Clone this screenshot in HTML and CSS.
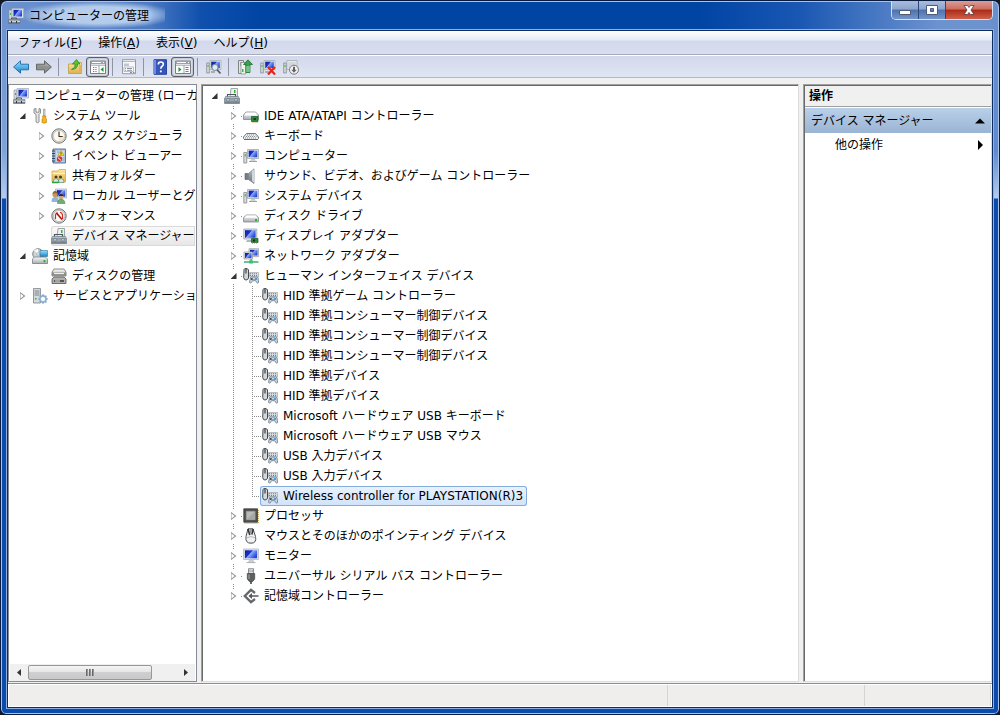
FILE: index.html
```html
<!DOCTYPE html>
<html lang="ja">
<head>
<meta charset="utf-8">
<title>コンピューターの管理</title>
<link rel="stylesheet" href="styles.css">
</head>
<body>
<svg class="sprite" aria-hidden="true">
  <defs>
    <linearGradient id="g-screen" x1="0" y1="0" x2="1" y2=".6"><stop offset="0" stop-color="#0c1a96"/><stop offset=".45" stop-color="#1a35d0"/><stop offset=".52" stop-color="#8fa9f8"/><stop offset="1" stop-color="#2145dc"/></linearGradient>
    <linearGradient id="g-metal" x1="0" y1="0" x2="0" y2="1"><stop offset="0" stop-color="#fafafa"/><stop offset="1" stop-color="#a9adb1"/></linearGradient>
    <linearGradient id="g-box" x1="0" y1="0" x2="0" y2="1"><stop offset="0" stop-color="#b4bec6"/><stop offset="1" stop-color="#66747f"/></linearGradient>
    <linearGradient id="g-blue" x1="0" y1="0" x2="0" y2="1"><stop offset="0" stop-color="#9be0fb"/><stop offset="1" stop-color="#1585d0"/></linearGradient>
    <linearGradient id="g-folder" x1="0" y1="0" x2="0" y2="1"><stop offset="0" stop-color="#fbe9a4"/><stop offset="1" stop-color="#dfae4c"/></linearGradient>
  </defs>
  <symbol id="i-mgmt" viewBox="0 0 16 16">
    <path d="M1 2h3v9H1z" fill="#d4d7da" stroke="#8a8f96" stroke-width=".6"/><path d="M2 5h1v2H2z" fill="#3b3"/>
    <path d="M4 .5h11.500V10H4z" fill="#dde1e6" stroke="#a4abb4" stroke-width=".7"/><path d="M5.500 1.800h8.500v6.700H5.500z" fill="url(#g-screen)"/>
    <path d="M3.500 11.500v-1.500h5v1.500" fill="none" stroke="#555" stroke-width="1"/><path d="M.5 11.500h11.500v4H.5z" fill="url(#g-box)" stroke="#65727d" stroke-width=".6"/><path d="M1 13.500h11" stroke="#ccd3d8"/><path d="M3 13h1v2H3zM8 13h1v2H8z" fill="#333"/>
  </symbol>
  <symbol id="i-devmgr" viewBox="0 0 16 16">
    <path d="M7 .5h6.500v8H6z" fill="#eceeef" stroke="#8e9397" stroke-width=".8"/><path d="M10 2h1.500v3H10z" fill="#38b52d"/>
    <path d="M3.500 9V6.500h8V9" fill="none" stroke="#4b555d" stroke-width="1.200"/>
    <path d="M1.500 8.500h13l1 2.500H.5z" fill="#b3bec6" stroke="#6d7983" stroke-width=".6"/><path d="M.5 11h15v4.500H.5z" fill="url(#g-box)" stroke="#65727d" stroke-width=".6"/><path d="M3 10.500h2v2.500H3zM11 10.500h2v2.500h-2z" fill="#dce2e6" stroke="#3f4a52" stroke-width=".4"/>
  </symbol>
  <symbol id="i-tools" viewBox="0 0 16 16">
    <path d="M2 1v4l2 1.500V14q1.500 1.500 3 0V6.500L8.500 5V1L7 .5v3.700H4V.5z" fill="#e3e5e7" stroke="#777" stroke-width=".8"/>
    <path d="M11.500 1h1.500v7h-1.500z" fill="#ddd" stroke="#777" stroke-width=".5"/><path d="M10.500 8h3.500l-.5 2 1 1v3.500q-2.200 1.500-4.500 0V11l1-1z" fill="#f6b51e" stroke="#b97d08" stroke-width=".6"/>
  </symbol>
  <symbol id="i-clock" viewBox="0 0 16 16">
    <circle cx="8" cy="8" r="7.200" fill="#d9d9d6" stroke="#77797b"/><circle cx="8" cy="8" r="5.600" fill="#fffaf0" stroke="#b8b4a8" stroke-width=".6"/><path d="M8 8v5.500a5.500 5.500 0 0 0 5.500-5.500z" fill="#f3d9a8" opacity=".6"/><path d="M8 3.500V8.500h3.700" fill="none" stroke="#333" stroke-width="1.100"/>
  </symbol>
  <symbol id="i-event" viewBox="0 0 16 16">
    <path d="M2 1h12.500v14H2z" fill="#a5bddb" stroke="#5f7797"/><path d="M5 2.500h8.500v11H5z" fill="#c9daee"/><path d="M1 3h3M1 5.500h3M1 8h3M1 10.500h3M1 13h3" stroke="#314763"/><path d="M10 2.500l3.200 5H6.800z" fill="#ffdc28" stroke="#a48100" stroke-width=".5"/><path d="M10 4.200v1.700M10 6.300v.6" stroke="#222" stroke-width=".8"/><circle cx="8.500" cy="11" r="2.700" fill="#dc3023"/><path d="M7 9.700l3 2.600" stroke="#fff"/><path d="M6 4h2M11.500 10h2M11.500 12h2" stroke="#577bad" stroke-width=".7"/>
  </symbol>
  <symbol id="i-share" viewBox="0 0 16 16">
    <path d="M1 3h6l1-1.500h6.500V14H1z" fill="url(#g-folder)" stroke="#c99f4a" stroke-width=".7"/><path d="M1.500 5.500h12.500" stroke="#fff5c9"/><circle cx="5" cy="9" r="1.500" fill="#53381e"/><circle cx="9.500" cy="9" r="1.500" fill="#53381e"/><path d="M2 14.500q0-4 3-4t3 4zM7 14.500q0-4 3-4t3 4z" fill="#d6e8df" stroke="#458b5c" stroke-width=".6"/><path d="M1 14.500h6" stroke="#27a33b" stroke-width="1.500"/>
  </symbol>
  <symbol id="i-users" viewBox="0 0 16 16">
    <path d="M4.500 1h11v9h-11z" fill="#e1e4e8" stroke="#a1a9b6" stroke-width=".7"/><path d="M5.800 2.200h8.500v6.500H5.800z" fill="url(#g-screen)"/><circle cx="4" cy="6.500" r="2.600" fill="#c9975c"/><path d="M1.500 6q.5-3.500 3-3t2.200 2.700q-3-1-5.200.3z" fill="#8a6a2f"/><path d="M.5 14q0-5 3.500-5t4 5z" fill="#8fb6d8"/><circle cx="10" cy="8.700" r="2.300" fill="#d8a873"/><path d="M7.700 8q.5-2.500 2.500-2.300t2 2.300z" fill="#35291b"/><path d="M6.500 15.500q0-4.500 3.500-4.500t4 4.500z" fill="#6fae74" stroke="#3d7d48" stroke-width=".5"/>
  </symbol>
  <symbol id="i-perf" viewBox="0 0 16 16">
    <circle cx="8" cy="8" r="7.200" fill="#d5d5d5" stroke="#747474"/><circle cx="8" cy="8" r="5.500" fill="#fff" stroke="#999" stroke-width=".5"/><path d="M4.500 11V7q.5-2 2-2.500M9 4.200q2.500.8 2.500 3.300V11" fill="none" stroke="#da251d" stroke-width="1.200"/><path d="M5.500 5l5.500 6.500" stroke="#a8150e" stroke-width="1.600"/>
  </symbol>
  <symbol id="i-storage" viewBox="0 0 16 16">
    <circle cx="6" cy="6" r="5.300" fill="#cdd4d4" stroke="#7e8a88"/><path d="M6 6L2 2.500A5 5 0 0 1 6 1z" fill="#f9fbfb"/><circle cx="6" cy="6" r="1.300" fill="#fff" stroke="#888" stroke-width=".5"/><path d="M8 2.500h7.500v6H8z" fill="url(#g-blue)" stroke="#2b7199" stroke-width=".6"/><path d="M2.500 9h11l2 2v4.500H.5V11z" fill="url(#g-metal)" stroke="#6a6f74" stroke-width=".7"/><path d="M11.500 12h2v2.200h-2z" fill="#27b52a"/>
  </symbol>
  <symbol id="i-diskmgmt" viewBox="0 0 16 16">
    <path d="M3 1h10l2 3v4H1V4z" fill="url(#g-metal)" stroke="#6f6f6b" stroke-width=".8"/><path d="M1 4.500h14v3H1z" fill="#8b8c87"/><path d="M3 5.500h10" stroke="#f1f1ef" stroke-width="1.200"/><path d="M3 9h10l2 2v4.500H1V11z" fill="#b0b1ad" stroke="#555" stroke-width=".8"/><path d="M3 12h10v2H3z" fill="#545450"/><path d="M4 13h5" stroke="#eee"/>
  </symbol>
  <symbol id="i-services" viewBox="0 0 16 16">
    <path d="M1.500.5h7v14.500h-7z" fill="#d7dadd" stroke="#7c838a" stroke-width=".8"/><path d="M2.500 3h5M2.500 5h5M2.500 7h5" stroke="#7c838a"/><path d="M3 10h1.500v1.500H3z" fill="#33b235"/><circle cx="11" cy="11" r="3" fill="#fff" stroke="#9dbbd6" stroke-width="1.800"/><path d="M11 6.300v2M11 13.700v2M6.300 11h2M13.700 11h2M7.700 7.700l1.400 1.400M13 13l1.400 1.400M7.700 14.300L9.100 13M13 9.100l1.400-1.400" stroke="#7fa3c6" stroke-width="1.400"/>
  </symbol>
  <symbol id="i-ide" viewBox="0 0 16 16">
    <path d="M3 4h9.500l3 3v4.500H.5V7z" fill="url(#g-metal)" stroke="#85898e" stroke-width=".8"/><path d="M3 4.700h9.500l2 2.800H1.500z" fill="#fff"/><path d="M8.500 8.500h6.500V13.500H8.500z" fill="#2c8740" stroke="#16582a" stroke-width=".7"/><path d="M10.500 10h2.500v2h-2.500z" fill="#1c3a24"/><path d="M9.500 14.500h5" stroke="#d3b447" stroke-dasharray="1 1"/>
  </symbol>
  <symbol id="i-keyboard" viewBox="0 0 16 16">
    <path d="M3.500 5.500h9l3 3.500v1.500l-1 1H1.500l-1-1V9z" fill="#e9ebed" stroke="#676b71" stroke-width=".9"/><path d="M4 7h8.500M3 8.500h10.500M2 10h12" stroke="#8b9097" stroke-dasharray="1 1"/><path d="M1 11.500h14" stroke="#63676d" stroke-width=".8"/>
  </symbol>
  <symbol id="i-computer" viewBox="0 0 16 16">
    <path d="M.8 4.500h3v10.500h-3z" fill="#d8dbdd" stroke="#777d83" stroke-width=".7"/><path d="M1.700 6h1v2.500h-1z" fill="#35b32a"/><path d="M4.500 1.500h11v9h-11z" fill="#e3e6e9" stroke="#a2a8ae" stroke-width=".8"/><path d="M5.700 2.600h8.600v6.700H5.700z" fill="url(#g-screen)"/><path d="M8.500 10.800h3l1.500 2H7z" fill="#c3c8cc"/><path d="M6 13.500h8" stroke="#9aa0a6" stroke-width="1"/>
  </symbol>
  <symbol id="i-sound" viewBox="0 0 16 16">
    <path d="M2 5.500h3.500v6H2z" fill="#777e85" stroke="#555c63" stroke-width=".6"/><path d="M5.500 5.500L11 .8v14.700l-5.500-4z" fill="url(#g-box)" stroke="#7b838a" stroke-width=".7"/><path d="M9 3l2-1.800v13.600L9 13z" fill="#d2d7dc"/>
  </symbol>
  <symbol id="i-disk" viewBox="0 0 16 16">
    <path d="M3.500 7h9l3 2.500V14H.5V9.500z" fill="url(#g-metal)" stroke="#85898e" stroke-width=".8"/><path d="M3.500 7.500h9l2 2.200H1.500z" fill="#fff"/><path d="M12 11h2v2h-2z" fill="#30b21f"/>
  </symbol>
  <symbol id="i-display" viewBox="0 0 16 16">
    <path d="M.8 1h13v10H.8z" fill="#dfe2e5" stroke="#a0a6ac" stroke-width=".8"/><path d="M2 2.200h10.600v7.600H2z" fill="url(#g-screen)"/><path d="M4 12h5v2H3z" fill="#b1b7bd"/><path d="M8.500 10.500h6.500v4H8.500z" fill="#2a883d" stroke="#15572a" stroke-width=".7"/><path d="M10 11.500h2v2h-2z" fill="#182d1d"/><path d="M9 15.300h6" stroke="#c9b14c" stroke-dasharray="1 1"/>
  </symbol>
  <symbol id="i-network" viewBox="0 0 16 16">
    <path d="M6 .7h9.500v8H6z" fill="#dfe3e7" stroke="#8f969e" stroke-width=".7"/><path d="M7 1.800h7.500v5.700H7z" fill="url(#g-screen)"/><path d="M1 4h8.500v7H1z" fill="#dfe3e7" stroke="#8f969e" stroke-width=".7"/><path d="M2 5h6.500v5H2z" fill="url(#g-screen)"/><path d="M7.200 11h2v2h-2z" fill="#4bc17b"/><path d="M1 14h14.500" stroke="#2ca865" stroke-width="1.400"/><path d="M6 12.500h4v3H6z" fill="#35c277"/>
  </symbol>
  <symbol id="i-hid" viewBox="0 0 16 16">
    <path d="M6.500 4.500h9v4.500h-9z" fill="#d9dcdf" stroke="#9a9fa5" stroke-width=".6"/><path d="M7 5.700h8M7 7.500h8" stroke="#7a7f86" stroke-dasharray="1 1"/><path d="M1 1.500q0-1 2-1t2.500 1.500v8q-.5 2-2.500 2T.7 9.500z" fill="#d4d7da" stroke="#43484e"/><path d="M3 1v4.500" stroke="#3a3f45" stroke-width="1.200"/><path d="M7.500 9.500q1-1 2.300-.5h2.400q2-.5 2.800.7l.6 4.800q-.6 1.300-1.700.2l-1.200-2H9.500l-1.200 2q-1.300 1-1.800-.4z" fill="#d3dde6" stroke="#66727d" stroke-width=".8"/><path d="M7.800 11h2M8.800 10v2" stroke="#334"/><circle cx="13" cy="11" r="1.100" fill="#268ee0"/><circle cx="11" cy="11.500" r=".8" fill="#4aa0e4"/>
  </symbol>
  <symbol id="i-cpu" viewBox="0 0 16 16">
    <path d="M1.500 15.300h14" fill="none" stroke="#c49a40" stroke-dasharray="1 1"/><path d="M15.300 2v13" stroke="#c49a40" stroke-dasharray="1 1"/><path d="M.8.8h13.700v13.400H.8z" fill="#4e504e" stroke="#3a3c3a" stroke-width=".8"/><path d="M3.200 3.200h9v8.600h-9z" fill="#b9bbb9" stroke="#8f918f" stroke-width=".6"/><path d="M3.500 11.500l8.500-8v8z" fill="#a6a8a6"/>
  </symbol>
  <symbol id="i-mouse" viewBox="0 0 16 16">
    <path d="M5 .8h5l2.500 7.700q1.500 6.700-4.500 6.700T3 8.500z" fill="#f0f1f2" stroke="#4a4d50"/><path d="M5 1l1.800 6M10.200 1L8.800 6.500" stroke="#333" stroke-width="1.600"/><path d="M6.500 1h2.500l-.5 4.500H7z" fill="#999"/><path d="M3.500 10q4.500-3 9 0" fill="none" stroke="#b5b8bb"/>
  </symbol>
  <symbol id="i-monitor" viewBox="0 0 16 16">
    <path d="M.6 1h14.800v10.500H.6z" fill="#e3e6ea" stroke="#b0b6bd" stroke-width=".8"/><path d="M1.900 2.300h12.200v8H1.900z" fill="url(#g-screen)"/><path d="M6 12h4.500l1 2H5z" fill="#c9cdd2"/><path d="M3.500 14.600h9" stroke="#a9afb5" stroke-width="1"/>
  </symbol>
  <symbol id="i-usb" viewBox="0 0 16 16">
    <path d="M5.500.7h5V6h-5z" fill="#dcdee0" stroke="#777" stroke-width=".8"/><path d="M6.500 2h1v2h-1zM8.700 2h1v2h-1z" fill="#999"/><path d="M4.300 5.500h7.400V11l-2 2.500H6.300L4.300 11z" fill="#5c5f62" stroke="#444" stroke-width=".7"/><path d="M8 13v3" stroke="#444" stroke-width="1.600"/><path d="M6 6.500v4.500" stroke="#aaa"/>
  </symbol>
  <symbol id="i-storctl" viewBox="0 0 16 16">
    <path d="M12 5L8 1.800 1.800 8 8 14.200 12 11" fill="none" stroke="#66686a" stroke-width="2.400"/><path d="M6.500 8h9" stroke="#55585a" stroke-width="1.500"/><path d="M5.500 8L9 5v6z" fill="#55585a"/>
  </symbol>
  <symbol id="i-back" viewBox="0 0 16 16"><path d="M.6 8L7.500 1.800v3.400h8v5.600h-8v3.400z" fill="url(#g-blue)" stroke="#1a6aa5" stroke-width=".9"/></symbol>
  <symbol id="i-fwd" viewBox="0 0 16 16"><path d="M15.400 8L8.500 1.800v3.400h-8v5.600h8v3.400z" fill="#8f9191" stroke="#5e6060" stroke-width=".9"/><path d="M1.500 6.300h8V4l4 3.500z" fill="#a6a8a8"/></symbol>
  <symbol id="i-up" viewBox="0 0 16 16"><path d="M1.500 5h5l1-1.500h7V14.500h-13z" fill="url(#g-folder)" stroke="#c39a45" stroke-width=".8"/><path d="M12 6h2.500v8H12z" fill="#e2b452"/><path d="M4.500 10.500Q8.500 9 8 5H5.500L9.500.5 13 5H10.500q.5 5-6 5.500z" fill="#53c72c" stroke="#23811a" stroke-width=".7"/></symbol>
  <symbol id="i-panel-l" viewBox="0 0 16 16"><path d="M.5 2h15v12.500H.5z" fill="#fff" stroke="#777c88"/><path d="M.5 2h15v3H.5z" fill="#9ba0ab"/><path d="M2 3.500h9M13 3.500h1" stroke="#fff"/><path d="M1 6.200h14M9 6v8" stroke="#9ca2ae"/><path d="M3 8.500h4M3 10.500h4M3 12.500h4" stroke="#5c82b6" stroke-dasharray="1 .7"/><path d="M13.500 8v5L10.500 10.500z" fill="#199826"/></symbol>
  <symbol id="i-panel-r" viewBox="0 0 16 16"><path d="M.5 2h15v12.500H.5z" fill="#fff" stroke="#777c88"/><path d="M.5 2h15v3H.5z" fill="#9ba0ab"/><path d="M2 3.500h9M13 3.500h1" stroke="#fff"/><path d="M1 6.200h14M9 6v8" stroke="#9ca2ae"/><path d="M10.500 8.500h3M10.500 10.500h3M10.500 12.500h3" stroke="#4d83bd"/><path d="M3.500 8v5l3-2.500z" fill="#199826"/></symbol>
  <symbol id="i-props" viewBox="0 0 16 16"><path d="M1.500.7h13v14h-13z" fill="#f7f8fa" stroke="#8b919c" stroke-width=".9"/><path d="M2 2.500h12" stroke="#b3b8c3"/><path d="M3 4.500h5v2.500H3z" fill="#c0c5cf"/><path d="M3 8h9.500v4.500H3z" fill="#fff" stroke="#a2a8b3" stroke-width=".7"/><path d="M4 9.500h1M6 9.500h5M4 11.300h1M6 11.300h5" stroke="#8b93a0"/><path d="M9 13.500h2M12 13.500h1.500" stroke="#888"/></symbol>
  <symbol id="i-help" viewBox="0 0 16 16"><path d="M2 .7h12.500v14.600H2z" fill="#3656bd" stroke="#2a479f"/><path d="M2 1h2v14H2z" fill="#6f8be0"/><path d="M6.300 5.500q0-2.500 2.500-2.500t2.500 2.200q0 1.300-1.500 2.300-1 .7-1 2.300" fill="none" stroke="#fff" stroke-width="1.600"/><path d="M7.900 11.500h1.800v1.800H7.900z" fill="#fff"/></symbol>
  <symbol id="i-scan" viewBox="0 0 16 16"><path d="M.7 4h2.600v10H.7z" fill="#d7dadd" stroke="#7a8086" stroke-width=".7"/><path d="M1.500 6h1v2h-1z" fill="#3b3"/><path d="M4 1.500h11v9H4z" fill="#e2e5e8" stroke="#a2a9b0" stroke-width=".7"/><path d="M5.200 2.700h8.600v6.500H5.200z" fill="url(#g-screen)"/><path d="M5 13h4" stroke="#8a9097" stroke-width="1.300"/><circle cx="9" cy="8.500" r="3" fill="#d8eefa" stroke="#8b939b" stroke-width="1.200"/><path d="M11.200 10.800l3.300 3.700" stroke="#59636c" stroke-width="1.800"/></symbol>
  <symbol id="i-update" viewBox="0 0 16 16"><path d="M1.500 1.500h5v13h-5z" fill="#e1e5e1" stroke="#687068" stroke-width=".8"/><path d="M3 4h2M3 6h2" stroke="#777"/><path d="M4 3.500h4.500v11.500H4z" fill="#f0f3f0" stroke="#7b847b" stroke-width=".7"/><path d="M5.200 10h1.200v3H5.200z" fill="#1ba33b"/><path d="M11 .8l4.500 4.700H13V13.500H9V5.500H6.500z" fill="#35a14b" stroke="#116824" stroke-width=".7"/><path d="M9 8h4M9 10h4M9 12h4" stroke="#dff5df" stroke-width=".8"/></symbol>
  <symbol id="i-remove" viewBox="0 0 16 16"><path d="M.7 4h2.600v10H.7z" fill="#d7dadd" stroke="#7a8086" stroke-width=".7"/><path d="M1.500 6h1v2h-1z" fill="#3b3"/><path d="M4 1.500h11v9H4z" fill="#e2e5e8" stroke="#a2a9b0" stroke-width=".7"/><path d="M5.200 2.700h8.600v6.500H5.200z" fill="url(#g-screen)"/><path d="M5 13h4" stroke="#8a9097" stroke-width="1.300"/><path d="M8 8l7 7.500M15 8L8 15.500" stroke="#e12519" stroke-width="2.200"/></symbol>
  <symbol id="i-disable" viewBox="0 0 16 16"><path d="M.7 4h2.600v10H.7z" fill="#d7dadd" stroke="#7a8086" stroke-width=".7"/><path d="M1.500 6h1v2h-1z" fill="#3b3"/><path d="M4 1.500h10v9H4z" fill="#f0f1f3" stroke="#a2a9b0" stroke-width=".8"/><path d="M5.200 2.700h7.600v6.500H5.200z" fill="#d3d6dc"/><circle cx="11" cy="10.700" r="4.500" fill="#f2f2f2" stroke="#777"/><path d="M10 7.700h2v3h1.700L11 13.700l-2.700-3H10z" fill="#606264"/></symbol>
</svg>

<div class="window">
  <header class="titlebar">
    <h1 class="title"><svg class="icon"><use href="#i-mgmt"/></svg><span>コンピューターの管理</span></h1>
    <div class="caption">
      <button class="cap" aria-label="最小化"><svg viewBox="0 0 14 12"><path d="M1.500 6.500h11v4h-11z" fill="#fff" stroke="#4d5b78"/></svg></button>
      <button class="cap" aria-label="最大化"><svg viewBox="0 0 14 12"><path d="M1.500 1.500h11v9h-11zM5.500 4.500h3v3h-3z" fill="#fff" fill-rule="evenodd" stroke="#4d5b78"/></svg></button>
      <button class="cap close" aria-label="閉じる"><svg viewBox="0 0 14 12"><path d="M2 1.500h3.500L7 3.500l1.500-2H12L9 6l3 4.500H8.500L7 8.500l-1.500 2H2L5 6z" fill="#fff" stroke="#5b3840" stroke-width=".8"/></svg></button>
    </div>
  </header>

  <div class="client">
    <nav class="menubar">
      <button class="menu">ファイル(<u>F</u>)</button>
      <button class="menu">操作(<u>A</u>)</button>
      <button class="menu">表示(<u>V</u>)</button>
      <button class="menu">ヘルプ(<u>H</u>)</button>
    </nav>
    <div class="toolbar" role="toolbar">
      <button class="tool" aria-label="戻る"><svg class="icon"><use href="#i-back"/></svg></button>
      <button class="tool" aria-label="進む"><svg class="icon"><use href="#i-fwd"/></svg></button>
      <span class="sep"></span>
      <button class="tool" aria-label="1 つ上のレベル"><svg class="icon"><use href="#i-up"/></svg></button>
      <button class="tool pressed" aria-label="コンソール ツリーの表示"><svg class="icon"><use href="#i-panel-l"/></svg></button>
      <span class="sep"></span>
      <button class="tool" aria-label="プロパティ"><svg class="icon"><use href="#i-props"/></svg></button>
      <span class="sep"></span>
      <button class="tool" aria-label="ヘルプ"><svg class="icon"><use href="#i-help"/></svg></button>
      <button class="tool pressed" aria-label="操作ウィンドウの表示"><svg class="icon"><use href="#i-panel-r"/></svg></button>
      <span class="sep"></span>
      <button class="tool" aria-label="ハードウェア変更のスキャン"><svg class="icon"><use href="#i-scan"/></svg></button>
      <span class="sep"></span>
      <button class="tool" aria-label="ドライバーの更新"><svg class="icon"><use href="#i-update"/></svg></button>
      <button class="tool" aria-label="削除"><svg class="icon"><use href="#i-remove"/></svg></button>
      <button class="tool" aria-label="無効"><svg class="icon"><use href="#i-disable"/></svg></button>
    </div>

    <main class="panes">
      <section class="pane nav-pane">
        <ul class="tree">
          <li><div class="row"><svg class="icon"><use href="#i-mgmt"/></svg><span class="label">コンピューターの管理 (ローカ</span></div>
            <ul>
              <li><div class="row"><span class="twist open"></span><svg class="icon"><use href="#i-tools"/></svg><span class="label">システム ツール</span></div>
                <ul class="sub">
                  <li><div class="row"><span class="twist shut"></span><svg class="icon"><use href="#i-clock"/></svg><span class="label">タスク スケジューラ</span></div></li>
                  <li><div class="row"><span class="twist shut"></span><svg class="icon"><use href="#i-event"/></svg><span class="label">イベント ビューアー</span></div></li>
                  <li><div class="row"><span class="twist shut"></span><svg class="icon"><use href="#i-share"/></svg><span class="label">共有フォルダー</span></div></li>
                  <li><div class="row"><span class="twist shut"></span><svg class="icon"><use href="#i-users"/></svg><span class="label">ローカル ユーザーとグ</span></div></li>
                  <li><div class="row"><span class="twist shut"></span><svg class="icon"><use href="#i-perf"/></svg><span class="label">パフォーマンス</span></div></li>
                  <li><div class="row"><span class="twist"></span><span class="current"><svg class="icon"><use href="#i-devmgr"/></svg><span class="label">デバイス マネージャー</span></span></div></li>
                </ul>
              </li>
              <li><div class="row"><span class="twist open"></span><svg class="icon"><use href="#i-storage"/></svg><span class="label">記憶域</span></div>
                <ul class="sub">
                  <li><div class="row"><span class="twist"></span><svg class="icon"><use href="#i-diskmgmt"/></svg><span class="label">ディスクの管理</span></div></li>
                </ul>
              </li>
              <li><div class="row"><span class="twist shut"></span><svg class="icon"><use href="#i-services"/></svg><span class="label">サービスとアプリケーショ</span></div></li>
            </ul>
          </li>
        </ul>
        <div class="scrollbar">
          <button class="scroll-btn left" aria-label="左へスクロール"></button>
          <div class="track"><div class="thumb"><i></i><i></i><i></i></div></div>
          <button class="scroll-btn right" aria-label="右へスクロール"></button>
        </div>
      </section>

      <section class="pane device-pane">
        <ul class="tree lined">
          <li><div class="row"><span class="twist open"></span><svg class="icon"><use href="#i-devmgr"/></svg></div>
            <ul class="sub">
              <li><div class="row"><span class="twist shut"></span><svg class="icon"><use href="#i-ide"/></svg><span class="label">IDE ATA/ATAPI コントローラー</span></div></li>
              <li><div class="row"><span class="twist shut"></span><svg class="icon"><use href="#i-keyboard"/></svg><span class="label">キーボード</span></div></li>
              <li><div class="row"><span class="twist shut"></span><svg class="icon"><use href="#i-computer"/></svg><span class="label">コンピューター</span></div></li>
              <li><div class="row"><span class="twist shut"></span><svg class="icon"><use href="#i-sound"/></svg><span class="label">サウンド、ビデオ、およびゲーム コントローラー</span></div></li>
              <li><div class="row"><span class="twist shut"></span><svg class="icon"><use href="#i-computer"/></svg><span class="label">システム デバイス</span></div></li>
              <li><div class="row"><span class="twist shut"></span><svg class="icon"><use href="#i-disk"/></svg><span class="label">ディスク ドライブ</span></div></li>
              <li><div class="row"><span class="twist shut"></span><svg class="icon"><use href="#i-display"/></svg><span class="label">ディスプレイ アダプター</span></div></li>
              <li><div class="row"><span class="twist shut"></span><svg class="icon"><use href="#i-network"/></svg><span class="label">ネットワーク アダプター</span></div></li>
              <li><div class="row"><span class="twist open"></span><svg class="icon"><use href="#i-hid"/></svg><span class="label">ヒューマン インターフェイス デバイス</span></div>
                <ul class="sub">
                  <li><div class="row"><span class="twist"></span><svg class="icon"><use href="#i-hid"/></svg><span class="label">HID 準拠ゲーム コントローラー</span></div></li>
                  <li><div class="row"><span class="twist"></span><svg class="icon"><use href="#i-hid"/></svg><span class="label">HID 準拠コンシューマー制御デバイス</span></div></li>
                  <li><div class="row"><span class="twist"></span><svg class="icon"><use href="#i-hid"/></svg><span class="label">HID 準拠コンシューマー制御デバイス</span></div></li>
                  <li><div class="row"><span class="twist"></span><svg class="icon"><use href="#i-hid"/></svg><span class="label">HID 準拠コンシューマー制御デバイス</span></div></li>
                  <li><div class="row"><span class="twist"></span><svg class="icon"><use href="#i-hid"/></svg><span class="label">HID 準拠デバイス</span></div></li>
                  <li><div class="row"><span class="twist"></span><svg class="icon"><use href="#i-hid"/></svg><span class="label">HID 準拠デバイス</span></div></li>
                  <li><div class="row"><span class="twist"></span><svg class="icon"><use href="#i-hid"/></svg><span class="label">Microsoft ハードウェア USB キーボード</span></div></li>
                  <li><div class="row"><span class="twist"></span><svg class="icon"><use href="#i-hid"/></svg><span class="label">Microsoft ハードウェア USB マウス</span></div></li>
                  <li><div class="row"><span class="twist"></span><svg class="icon"><use href="#i-hid"/></svg><span class="label">USB 入力デバイス</span></div></li>
                  <li><div class="row"><span class="twist"></span><svg class="icon"><use href="#i-hid"/></svg><span class="label">USB 入力デバイス</span></div></li>
                  <li><div class="row"><span class="twist"></span><span class="selected"><svg class="icon"><use href="#i-hid"/></svg><span class="label">Wireless controller for PLAYSTATION(R)3</span></span></div></li>
                </ul>
              </li>
              <li><div class="row"><span class="twist shut"></span><svg class="icon"><use href="#i-cpu"/></svg><span class="label">プロセッサ</span></div></li>
              <li><div class="row"><span class="twist shut"></span><svg class="icon"><use href="#i-mouse"/></svg><span class="label">マウスとそのほかのポインティング デバイス</span></div></li>
              <li><div class="row"><span class="twist shut"></span><svg class="icon"><use href="#i-monitor"/></svg><span class="label">モニター</span></div></li>
              <li><div class="row"><span class="twist shut"></span><svg class="icon"><use href="#i-usb"/></svg><span class="label">ユニバーサル シリアル バス コントローラー</span></div></li>
              <li><div class="row"><span class="twist shut"></span><svg class="icon"><use href="#i-storctl"/></svg><span class="label">記憶域コントローラー</span></div></li>
            </ul>
          </li>
        </ul>
      </section>

      <aside class="pane action-pane">
        <h2 class="action-head">操作</h2>
        <button class="action-group"><span>デバイス マネージャー</span><svg class="mark" viewBox="0 0 10 10"><path d="M0 7.500h10L5 2.500z"/></svg></button>
        <button class="action-item"><span>他の操作</span><svg class="mark" viewBox="0 0 10 10"><path d="M3 0v10l5-5z"/></svg></button>
      </aside>
    </main>

    <footer class="status"><span></span><span></span><span></span></footer>
  </div>
</div>
</body>
</html>
```

FILE: styles.css
```css
* { box-sizing: border-box; }

body {
  margin: 0;
  background: #16181f;
  color: #000;
  font: 12px/20px "DejaVu Sans", "Noto Sans CJK JP", sans-serif;
}

ul { margin: 0; padding: 0; list-style: none; }
button { border: 0; padding: 0; background: none; color: inherit; font: inherit; }
.sprite { position: absolute; width: 0; height: 0; }
.icon { width: 16px; height: 16px; flex: none; }

/* Window frame */
.window {
  display: flex;
  flex-direction: column;
  min-height: 100vh;
  padding: 0 6px 6px;
  border: 1px solid #0a1b3c;
  border-radius: 7px 7px 6px 6px;
  box-shadow: inset 0 0 0 1px #a9c4ea;
  background:
    linear-gradient(#6b90cc, #7fa3d8 150px, #b4cbec 197px, transparent 198px) 0 0 / 8px 100% no-repeat,
    linear-gradient(#6b90cc, #5f8ad0 150px, #b4cbec 197px, transparent 198px) 100% 0 / 8px 100% no-repeat,
    linear-gradient(90deg, #6d93cf, #4a78c2 150px, #0f50ad 200px, #0044a4 260px, #0044a4 70%, #1a57b3 80%, #6d93cf 94%) 0 0 / 100% 30px no-repeat,
    #0a4bad;
}

.titlebar { display: flex; justify-content: space-between; height: 29px; }
.title {
  display: flex;
  align-items: center;
  gap: 5px;
  margin: 0;
  padding: 0 16px 0 1px;
  background: radial-gradient(closest-side, #b4cbeb 60%, transparent) 12px 0 / 100% 28px no-repeat;
  font-size: 12px;
  font-weight: 400;
}
.title span { text-shadow: 0 0 6px #cfe0f6, 0 0 10px #b4cdee; }

.caption {
  display: flex;
  height: 19px;
  border: 1px solid #d2e0f4;
  border-top: 0;
  border-radius: 0 0 5px 5px;
  overflow: hidden;
}
.cap {
  display: grid;
  place-items: center;
  width: 27px;
  border-right: 1px solid #2c4878;
  background: linear-gradient(#a9bddd, #8ca6cf 45%, #4d71ac 50%, #7495cb);
}
.cap svg { width: 14px; height: 12px; }
.cap.close {
  width: 46px;
  border: 0;
  background: linear-gradient(#dc9c94, #cc6e61 45%, #ac2a15 50%, #cf604a);
}

.client {
  display: flex;
  flex: 1;
  flex-direction: column;
  border: 1px solid #0c2d63;
  outline: 1px solid #8fb0e0;
  background: #f0f0f0;
}

/* Menu and toolbar */
.menubar {
  display: flex;
  height: 24px;
  gap: 16px;
  padding: 0 10px;
  border-bottom: 1px solid #a9acb8;
  background: linear-gradient(#fff, #e6ebf5 9px, #d3d9ec 10px, #d8ddef);
}
.toolbar {
  display: flex;
  align-items: center;
  height: 23px;
  padding: 0 1px;
  border-top: 1px solid #fff;
  border-bottom: 1px solid #b3b8cb;
  background: linear-gradient(#d3d9ec, #e0e5f3);
}
.tool { display: grid; place-items: center; width: 23px; height: 20px; }
.tool.pressed {
  border: 1px solid #5c5f68;
  border-radius: 3px;
  background: #dde1ec;
  box-shadow: inset 0 0 2px #888c98;
}
.sep { width: 1px; height: 18px; margin: 0 4px 0 3px; background: #9095a4; }

/* Panes */
.panes {
  display: grid;
  grid-template-columns: 189px minmax(0, 1fr) 189px;
  gap: 4px;
  flex: 1;
  padding-top: 6px;
}
.pane {
  display: flex;
  flex-direction: column;
  min-width: 0;
  overflow: hidden;
  border: 1px solid #868b95;
  background: #fff;
}
.device-pane, .action-pane {
  padding: 1px 0 0 1px;
  border-color: #a0a0a0 #dcdcdc #dcdcdc #a0a0a0;
  box-shadow: inset 1px 1px #696969;
}
.nav-pane { padding: 0 1px; }

/* Trees */
.tree { flex: 1; padding: 1px 0 0 3px; }
.device-pane .tree { padding: 0 0 0 2px; }
.sub { padding-left: 19px; }
.row { display: flex; align-items: center; height: 20px; white-space: nowrap; }
.label { padding-left: 5px; }
.twist { display: grid; place-items: center; align-self: stretch; flex: none; width: 19px; }
.twist.shut::before, .twist.open::before {
  content: "";
  grid-area: 1 / 1;
  width: 12px;
  height: 14px;
  background: #fff;
}
.twist.shut::after, .twist.open::after { content: ""; grid-area: 1 / 1; }
.twist.shut::after {
  width: 6px;
  height: 9px;
  background: #9a9a9a;
  clip-path: polygon(0 0, 100% 50%, 0 100%, 0 0, 1px 2px, 1px 7px, 4px 50%, 1px 2px);
}
.twist.open::after {
  width: 6px;
  height: 6px;
  background: #333;
  clip-path: polygon(100% 0, 100% 100%, 0 100%);
}

.lined .sub .twist {
  background:
    repeating-linear-gradient(#8c8c8c 0 1px, transparent 1px 2px) 9px 0 / 1px 100% no-repeat,
    repeating-linear-gradient(90deg, #8c8c8c 0 1px, transparent 1px 2px) 9px 10px / 10px 1px no-repeat;
}
.lined .sub > li:last-child > .row > .twist {
  background-size: 1px 10px, 10px 1px;
}
.lined .sub .sub {
  background: repeating-linear-gradient(#8c8c8c 0 1px, transparent 1px 2px) 9px 0 / 1px 100% no-repeat;
}

.current {
  display: flex;
  align-items: center;
  flex: 1;
  height: 20px;
  border-radius: 3px 0 0 3px;
  background: linear-gradient(#fafafa, #e6e6e6);
  box-shadow: inset 0 0 0 1px #dadada;
}
.selected {
  display: flex;
  align-items: center;
  height: 20px;
  margin-left: -2px;
  padding: 0 4px 0 2px;
  border-radius: 3px;
  background: linear-gradient(#eaf3fd, #cfe3fb);
  box-shadow: inset 0 0 0 1px #84acdd;
}

/* Scrollbar */
.scrollbar { display: flex; height: 17px; background: #f0f0f0; }
.scroll-btn { display: grid; place-items: center; width: 18px; }
.scroll-btn::before { content: ""; width: 4px; height: 7px; background: #333; }
.scroll-btn.left::before { clip-path: polygon(100% 0, 100% 100%, 0 50%); }
.scroll-btn.right::before { clip-path: polygon(0 0, 100% 50%, 0 100%); }
.track { display: flex; flex: 1; padding: 1px 0; }
.thumb {
  display: flex;
  align-items: center;
  justify-content: center;
  gap: 1px;
  width: 83%;
  border: 1px solid #979797;
  border-radius: 2px;
  background: linear-gradient(#f5f5f5, #e6e6e6 45%, #cfcfd0 50%, #c8c8ca);
}
.thumb i { width: 2px; height: 7px; background: linear-gradient(90deg, #555, #aaa); }

/* Actions */
.action-head {
  margin: 0;
  padding: 0 4px;
  border-bottom: 1px solid #a0a0a0;
  background: #f0f0f0;
  font-size: 12px;
  line-height: 20px;
}
.action-group, .action-item {
  display: flex;
  align-items: center;
  justify-content: space-between;
  height: 23px;
  padding: 0 6px;
  text-align: left;
}
.action-group { height: 25px; margin-top: 1px; background: linear-gradient(#b9d0e9, #9ab4d3); }
.action-item { padding-left: 30px; }
.mark { width: 10px; height: 10px; }

/* Status bar */
.status {
  display: grid;
  grid-template-columns: minmax(0, 1fr) 197px 126px;
  height: 24px;
  margin-top: 1px;
  padding: 1px;
  border-top: 1px solid #8c8c8c;
  background: #fff;
}
.status span { border-right: 1px solid #d4d4d4; background: #f0eded; }
```
